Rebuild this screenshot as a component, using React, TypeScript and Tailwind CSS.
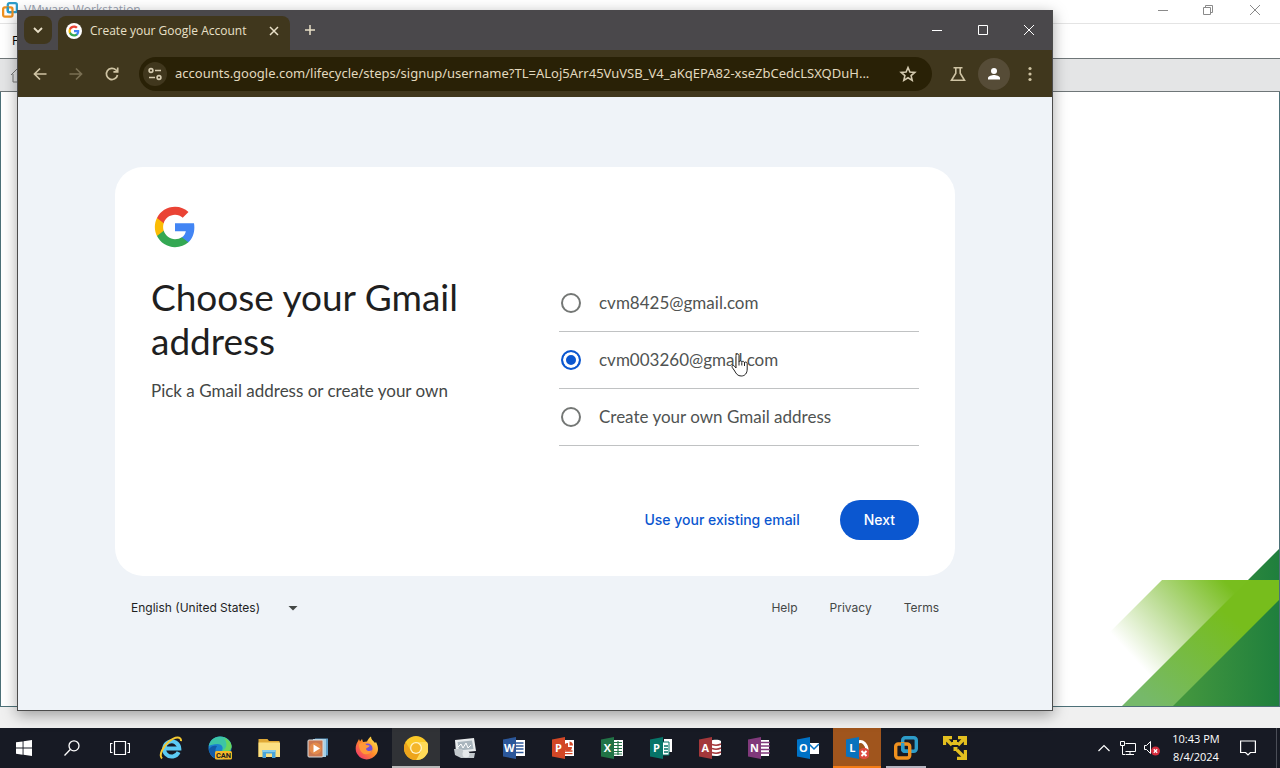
import { useState } from "react";
import type { ReactNode } from "react";

interface AddressOption {
  id: string;
  label: string;
}

interface TaskbarApp {
  name: string;
  icon: ReactNode;
  state?: "active" | "alert" | "open";
}

const addressOptions: AddressOption[] = [
  { id: "suggested-1", label: "cvm8425@gmail.com" },
  { id: "suggested-2", label: "cvm003260@gmail.com" },
  { id: "custom", label: "Create your own Gmail address" },
];

const footerLinks = ["Help", "Privacy", "Terms"];

function GoogleLogo({ className }: { className?: string }) {
  return (
    <svg className={className} viewBox="0 0 48 48">
      <path fill="#4285F4" d="M45.12 24.5c0-1.56-.14-3.06-.4-4.5H24v8.51h11.84c-.51 2.75-2.06 5.08-4.39 6.64v5.52h7.11c4.16-3.83 6.56-9.47 6.56-16.17z" />
      <path fill="#34A853" d="M24 46c5.94 0 10.92-1.97 14.56-5.33l-7.11-5.52c-1.97 1.32-4.49 2.1-7.45 2.1-5.73 0-10.58-3.87-12.31-9.07H4.34v5.7C7.96 41.07 15.4 46 24 46z" />
      <path fill="#FBBC05" d="M11.69 28.18C11.25 26.86 11 25.45 11 24s.25-2.86.69-4.18v-5.7H4.34C2.85 17.09 2 20.45 2 24s.85 6.91 2.34 9.88l7.35-5.7z" />
      <path fill="#EA4335" d="M24 10.75c3.23 0 6.13 1.11 8.41 3.29l6.31-6.31C34.91 4.18 29.93 2 24 2 15.4 2 7.96 6.93 4.34 14.12l7.35 5.7c1.73-5.2 6.58-9.07 12.31-9.07z" />
    </svg>
  );
}

function VmwareIcon({ className }: { className?: string }) {
  return (
    <svg className={className} viewBox="0 0 24 24" fill="none" strokeWidth="3.4">
      <rect x="8.7" y="1.7" width="13.6" height="13.6" rx="2.5" stroke="#2d9cc9" />
      <rect x="1.7" y="8" width="14" height="14" rx="2.5" stroke="#f0911f" />
      <path d="M8.7 7v6a2.3 2.3 0 0 0 2.3 2.3h3" stroke="#2d9cc9" />
    </svg>
  );
}

// Office 2016 style tile: coloured folder front with a letter, document at the back
function OfficeIcon({ letter, color, children }: { letter: string; color: string; children: ReactNode }) {
  return (
    <svg className="h-6 w-6" viewBox="0 0 24 24">
      {children}
      <path d="M1 3.5 14 1v22L1 20.5z" fill={color} />
      <text x="7.4" y="16.2" fill="#fff" fontSize="11" fontWeight="700" textAnchor="middle" fontFamily="Open Sans, sans-serif">
        {letter}
      </text>
    </svg>
  );
}

const apps: TaskbarApp[] = [
  {
    name: "Internet Explorer",
    icon: (
      <svg className="h-6 w-6" viewBox="0 0 24 24" fill="none">
        <path d="M19.6 16.2A7.6 7.6 0 1 1 20.3 12.6H6.5" stroke="#5ccbf3" strokeWidth="4" />
        <path d="M3 22.5C-.5 19 4 10.500 10 5.500S22.500 0 22 5.200" stroke="#f5c931" strokeWidth="2" />
      </svg>
    ),
  },
  {
    name: "Microsoft Edge Canary",
    icon: (
      <svg className="h-6 w-6" viewBox="0 0 24 24">
        <circle cx="12" cy="12" r="11.500" fill="#1c82cf" />
        <path d="M.8 10C2 4 6.500.5 12 .5c7 0 11.500 5 11.500 9.500 0 4-3 6-6 6s-4-1-3-3c.8-2-1-5-5-5-4 0-7 1-8.700 2z" fill="#3dc5a5" />
        <path d="M16 2c5 2 7.500 5 7.500 8.500 0 3.500-3 5.500-6 5.500-1.500 0-3-.5-3-1.500C20 12 19 6 16 2z" fill="#69d65c" />
        <path d="M8 12c-2 4 1 10 7 11-8 1.500-14-4-14-10 2-3 5-4 8-3z" fill="#125aa8" />
        <rect x="7" y="15" width="17" height="8.500" rx="1.500" fill="#f7b928" />
        <text x="15.500" y="22" fontSize="7.500" fontWeight="700" textAnchor="middle" fill="#222" fontFamily="Roboto, sans-serif">CAN</text>
      </svg>
    ),
  },
  {
    name: "File Explorer",
    icon: (
      <svg className="h-6 w-6" viewBox="0 0 24 24">
        <path d="M1.500 3h9l1.500 2h10.500v16h-21z" fill="#dfa937" />
        <path d="M1.500 6.500H23V21H1.500z" fill="#fbe083" />
        <path d="M5.500 22v-8h13v8h-3.500v-4.500h-6V22z" fill="#49a5db" />
        <path d="M5.500 14h13v2h-13z" fill="#83cbed" />
      </svg>
    ),
  },
  {
    name: "Media Player",
    icon: (
      <svg className="h-6 w-6" viewBox="0 0 24 24">
        <path d="M9 2.500h13v17H9z" fill="#5f9fca" />
        <path d="M7 3h13v18H7z" fill="#a7d0e6" />
        <rect x="2" y="4" width="15" height="17" rx="1" fill="#ca7851" stroke="#d5dce0" />
        <circle cx="9.500" cy="12.500" r="6" fill="#e38b4c" />
        <path d="M7.500 8.500v8l6.500-4z" fill="#fff" />
      </svg>
    ),
  },
  {
    name: "Firefox",
    icon: (
      <svg className="h-6 w-6" viewBox="0 0 24 24">
        <defs>
          <linearGradient id="fox" x1="1" y1="0" x2="0" y2="1">
            <stop offset=".1" stopColor="#ffe34a" />
            <stop offset=".5" stopColor="#ff8a2b" />
            <stop offset=".95" stopColor="#f02f72" />
          </linearGradient>
        </defs>
        <path d="M2.500 6 4 3l1 2.500L7 3l1 3 4-.5C13 3 14 2 16 .5c0 3 2 4 4 6.500l1-1c2 4 3 8 .5 12C17 25 7 25 3 19-.5 15 .5 9 2.500 6z" fill="url(#fox)" />
        <circle cx="12.500" cy="12.500" r="5" fill="#7350d8" />
        <path d="M4 8c3-2 6-1 7.500 1l3 .5c0 2-3 2-3.500 3.500 1 2.500 4 2.500 6 1-1 5-8 6-11 1.500C4 13 4 10 4 8z" fill="#ff9838" />
      </svg>
    ),
  },
  {
    name: "Chrome Canary",
    state: "active",
    icon: (
      <svg className="h-6 w-6" viewBox="0 0 24 24">
        <circle cx="12" cy="12" r="12" fill="#fbc928" />
        <path d="M12 6h11A12 12 0 0 1 12 24l5.200-9z" fill="#ffda57" />
        <path d="M1.600 6A12 12 0 0 0 12 24l5-9-10 0z" fill="#eea51c" />
        <circle cx="12" cy="12" r="6" fill="#fff2c4" />
        <circle cx="12" cy="12" r="4.700" fill="#f4b629" />
      </svg>
    ),
  },
  {
    name: "Server Monitor",
    icon: (
      <svg className="h-6 w-6" viewBox="0 0 24 24">
        <path d="M2 4 21 2l2 13-20 2z" fill="#e8ebed" />
        <path d="m4.500 6 14.500-1.500 1.500 8.500-14.500 1.500z" fill="#a9b5bd" />
        <path d="m5 11 3-3 2 4 3-5 2 5 3-3" fill="none" stroke="#fff" />
        <path d="M1 13h8l2 4h11l-1 5H8l-6-3z" fill="#c3c9cd" />
        <circle cx="13" cy="18" r="3.500" fill="#e6e9eb" />
      </svg>
    ),
  },
  {
    name: "Word",
    icon: (
      <OfficeIcon letter="W" color="#2b579a">
        <path d="M12 4h11v16H12z" fill="#fff" />
        <path d="M14 7h7.500M14 10h7.500M14 13h7.500M14 16.500h7.500" stroke="#2b579a" strokeWidth="1.400" />
      </OfficeIcon>
    ),
  },
  {
    name: "PowerPoint",
    icon: (
      <OfficeIcon letter="P" color="#d24726">
        <path d="M12 4h11v16H12z" fill="#fff" />
        <path d="M14 15h7.500M14 17.700h7.500" stroke="#d24726" strokeWidth="1.300" />
        <path d="M17 7v4h4a4 4 0 1 1-4-4z" fill="#d24726" />
        <path d="M18.500 5.500v4h3.500a4 4 0 0 0-3.500-4z" fill="#d24726" />
      </OfficeIcon>
    ),
  },
  {
    name: "Excel",
    icon: (
      <OfficeIcon letter="X" color="#217346">
        <path d="M12 4h11v16H12z" fill="#fff" />
        <path d="M14 6.500h8M14 9.500h8M14 12.500h8M14 15.500h8M14 18h8M18 5v14" stroke="#217346" strokeWidth="1.200" />
      </OfficeIcon>
    ),
  },
  {
    name: "Publisher",
    icon: (
      <OfficeIcon letter="P" color="#077568">
        <path d="M15 3h8v13h-8z" fill="#fff" />
        <path d="M12 6h8v13h-8z" fill="#fff" stroke="#077568" />
        <path d="M15 10h4M15 13h4M15 16h4" stroke="#077568" strokeWidth="1.300" />
      </OfficeIcon>
    ),
  },
  {
    name: "Access",
    icon: (
      <OfficeIcon letter="A" color="#a4373a">
        <path d="M12 5c4-2 9-1.500 11 0v13.500c-2 2-7 2-11 .5z" fill="#fff" />
        <path d="M14 8.500c3 1 6 1 9-.5M14 12.500c3 1 6 1 9-.5M14 16.500c3 1 6 1 9-.5" stroke="#a4373a" strokeWidth="1.400" fill="none" />
      </OfficeIcon>
    ),
  },
  {
    name: "OneNote",
    icon: (
      <OfficeIcon letter="N" color="#80397b">
        <path d="M12 4h10v16H12z" fill="#fff" />
        <path d="M14 6.500h9M14 10h9M14 13.500h9M14 17h9" stroke="#80397b" strokeWidth="1.500" />
      </OfficeIcon>
    ),
  },
  {
    name: "Outlook",
    icon: (
      <OfficeIcon letter="O" color="#0072c6">
        <path d="M12 7h11v11H12z" fill="#fff" />
        <path d="m13 8 5 5 5-5" stroke="#0072c6" strokeWidth="1.500" fill="none" />
      </OfficeIcon>
    ),
  },
  {
    name: "Lync",
    state: "alert",
    icon: (
      <OfficeIcon letter="L" color="#0a72bd">
        <path d="M13 6c5-2 9 3 9 8" stroke="#fff" strokeWidth="3" fill="none" />
        <circle cx="19" cy="17.500" r="5.800" fill="#dc4b3e" />
        <path d="m16.500 15 5 5m0-5-5 5" stroke="#fff" strokeWidth="2" />
      </OfficeIcon>
    ),
  },
  { name: "VMware Workstation", state: "open", icon: <VmwareIcon className="h-6 w-6" /> },
  {
    name: "Remote Tools",
    icon: (
      <svg className="h-6 w-6" viewBox="0 0 24 24" fill="none" stroke="#e3bf1f" strokeWidth="3.200">
        <path d="M1.600 9V1.600H9M2 2l7 7M15 1.600h7.400V9M22 2l-7 7M22.400 14v8.400H14M22 22l-8-8M9 7.500h6" />
        <path d="M10 4h4v3h-4zM10.500 11h4v4h-4z" fill="#e3bf1f" stroke="none" />
      </svg>
    ),
  },
];

function CaptionIcon({ d }: { d: string }) {
  return (
    <svg className="h-3 w-3" viewBox="0 0 12 12" fill="none" stroke="currentColor">
      <path d={d} />
    </svg>
  );
}

function VmwareWindow() {
  return (
    <section className="absolute inset-0 flex flex-col bg-[#f0f0f0] font-['Open_Sans',sans-serif] text-xs">
      <div className="flex h-6 shrink-0 items-center border-b border-[#e4e4e4] bg-white pb-1 pl-0.5">
        <VmwareIcon className="h-4 w-4" />
        <span className="ml-1.5 text-gray-400">VMware Workstation</span>
        <div className="ml-auto flex items-center text-[#8a8a8a]">
          <button aria-label="Minimize workstation" className="grid h-5 w-[45px] place-items-center"><CaptionIcon d="M1 6.500h10" /></button>
          <button aria-label="Restore workstation" className="grid h-5 w-[45px] place-items-center"><CaptionIcon d="M1.500 3.500h7v7h-7zM3.500 3.500v-2h7v7h-2" /></button>
          <button aria-label="Close workstation" className="grid h-5 w-[50px] place-items-center"><CaptionIcon d="m1 1 10 10M11 1 1 11" /></button>
        </div>
      </div>
      <div className="flex h-[34px] shrink-0 items-center bg-white px-3">File</div>
      <div className="flex h-[34px] shrink-0 items-center border-y border-[#6f7678] bg-[#e4e5e6] px-2.5">
        <svg className="h-4 w-4" viewBox="0 0 16 16" fill="none" stroke="#777"><path d="m1 8 7-7 7 7M3 7v8h10V7" /></svg>
      </div>
      <div className="flex flex-1 items-end justify-end border-x border-b border-[#4d7078] bg-white">
        <svg className="h-[158px] w-[190px]" viewBox="0 0 190 158">
          <defs>
            <linearGradient id="leaf" gradientUnits="userSpaceOnUse" x1="142" y1="40" x2="50" y2="125">
              <stop offset="0" stopColor="#78be1e" />
              <stop offset=".45" stopColor="#b5d98a" />
              <stop offset=".95" stopColor="#fff" />
            </linearGradient>
            <linearGradient id="band" x1="1" y1="0" x2="0" y2="1">
              <stop offset=".3" stopColor="#77bd1c" />
              <stop offset=".9" stopColor="#76b96a" />
            </linearGradient>
            <linearGradient id="forest" x1="0" x2="1">
              <stop offset=".4" stopColor="#42963e" />
              <stop offset="1" stopColor="#1f7f3d" />
            </linearGradient>
          </defs>
          <path d="M190 1v157H33z" fill="url(#forest)" />
          <path d="M73 32h117L64 158H33L0 105z" fill="url(#leaf)" />
          <path d="M33 158 159 32h31v20L84 158z" fill="url(#band)" />
        </svg>
      </div>
      <div className="h-[21px] shrink-0" />
    </section>
  );
}

function BrowserChrome() {
  return (
    <header className="shrink-0 font-['Open_Sans',sans-serif] text-[#e9e0c8]">
      <div className="flex h-10 items-stretch bg-[#4a484b]">
        <button aria-label="Search tabs" className="mt-1.5 ml-1.5 grid h-7 w-7 place-items-center rounded-lg bg-[#40371d]">
          <svg className="h-3 w-3" viewBox="0 0 12 12" fill="none" stroke="currentColor" strokeWidth="1.800"><path d="m2 4 4 4 4-4" /></svg>
        </button>
        <div className="mt-1.5 ml-1.5 flex w-[232px] items-center rounded-t-lg bg-[#40371d] px-2 pb-1">
          <span className="grid h-4 w-4 shrink-0 place-items-center rounded-full bg-white"><GoogleLogo className="h-3 w-3" /></span>
          <span className="ml-2 flex-1 text-xs whitespace-nowrap">Create your Google Account</span>
          <button aria-label="Close tab" className="grid h-4 w-4 place-items-center">
            <svg className="h-2.5 w-2.5" viewBox="0 0 10 10" stroke="currentColor" strokeWidth="1.500"><path d="m1 1 8 8M9 1 1 9" /></svg>
          </button>
        </div>
        <button aria-label="New tab" className="ml-2 grid w-6 place-items-center">
          <svg className="h-3 w-3" viewBox="0 0 12 12" stroke="currentColor" strokeWidth="1.500"><path d="M6 1v10M1 6h10" /></svg>
        </button>
        <div className="ml-auto flex text-white">
          <button aria-label="Minimize" className="grid w-[46px] place-items-center"><CaptionIcon d="M1 6.500h10" /></button>
          <button aria-label="Maximize" className="grid w-[46px] place-items-center"><CaptionIcon d="M1.500 1.500h9v9h-9z" /></button>
          <button aria-label="Close" className="grid w-[46px] place-items-center"><CaptionIcon d="m1 1 10 10M11 1 1 11" /></button>
        </div>
      </div>

      <div className="flex h-[47px] items-center bg-[#40371d] pr-3 pl-px">
        <button aria-label="Back" className="grid h-8 w-9 place-items-center pl-1.5">
          <svg className="h-4 w-4" viewBox="0 0 16 16" fill="none" stroke="#cfc4a4" strokeWidth="1.700"><path d="M14.500 8H2.500M8 2.500 2.500 8 8 13.500" /></svg>
        </button>
        <button aria-label="Forward" className="grid h-8 w-9 place-items-center pl-1.5">
          <svg className="h-4 w-4" viewBox="0 0 16 16" fill="none" stroke="#7a7053" strokeWidth="1.700"><path d="M1.500 8h12M8 2.500 13.500 8 8 13.500" /></svg>
        </button>
        <button aria-label="Reload" className="grid h-8 w-9 place-items-center pl-1.5">
          <svg className="h-4 w-4" viewBox="0 0 16 16" fill="none" stroke="#cfc4a4" strokeWidth="1.700"><path d="M13.500 9A5.600 5.600 0 1 1 12 4l1.500 1.500M13.700 1.500v4.300H9.400" /></svg>
        </button>
        <div className="ml-3 flex h-[34px] flex-1 items-center rounded-full bg-[#292106] pr-3.5 pl-1">
          <span className="grid h-6 w-6 shrink-0 place-items-center rounded-full bg-[#40371d]">
            <svg className="h-4 w-4" viewBox="0 0 16 16" fill="none" stroke="#d5cbb0" strokeWidth="1.600"><circle cx="4" cy="4.500" r="1.900" /><path d="M8 4.500h6M2 11.500h6" /><circle cx="12" cy="11.500" r="1.900" /></svg>
          </span>
          <input
            aria-label="Address"
            readOnly
            className="ml-2 min-w-0 flex-1 bg-transparent font-['Noto_Sans',sans-serif] text-[13px] text-[#e2d9bf] outline-none"
            value="accounts.google.com/lifecycle/steps/signup/username?TL=ALoj5Arr45VuVSB_V4_aKqEPA82-xseZbCedcLSXQDuH..."
          />
          <button aria-label="Bookmark" className="ml-1">
            <svg className="h-5 w-5" viewBox="0 0 20 20" fill="none" stroke="#d5cbb0" strokeWidth="1.600"><path d="m10 3.500 1.900 4.500 4.900.4-3.700 3.200 1.100 4.800-4.200-2.600-4.200 2.600 1.100-4.800-3.700-3.200 4.900-.4z" /></svg>
          </button>
        </div>
        <button aria-label="Labs" className="ml-4">
          <svg className="h-5 w-5" viewBox="0 0 20 20" fill="none" stroke="#cfc4a4" strokeWidth="1.600"><path d="M5.500 3.800h9M7.800 4v5.200L3.500 16.300h13L12.200 9.200V4" /></svg>
        </button>
        <button aria-label="Profile" className="ml-2.5 grid h-8 w-8 place-items-center rounded-full bg-[#564c37]">
          <svg className="h-4 w-4" viewBox="0 0 16 16" fill="#fff"><circle cx="8" cy="5" r="3" /><path d="M2 13.500v-1.500c0-2 4-3 6-3s6 1 6 3v1.500z" /></svg>
        </button>
        <button aria-label="Menu" className="ml-2.5">
          <svg className="h-5 w-5" viewBox="0 0 20 20" fill="#cfc4a4"><circle cx="10" cy="4.500" r="1.600" /><circle cx="10" cy="10" r="1.600" /><circle cx="10" cy="15.500" r="1.600" /></svg>
        </button>
      </div>
    </header>
  );
}

function SignupPage() {
  const [selected, setSelected] = useState("suggested-2");

  return (
    <main className="flex-1 bg-[#eff3f8] pt-[70px] font-['Lato',sans-serif] text-[#1f1f1f]">
      <div className="mx-auto max-w-[840px]">
        <form className="rounded-[28px] bg-white p-9" onSubmit={(e) => e.preventDefault()}>
          <GoogleLogo className="h-12 w-12 p-0.5" />
          <div className="mt-6 flex justify-between">
            <div className="w-[360px]">
              <h1 className="text-[37px] leading-[44px]">Choose your Gmail address</h1>
              <p className="mt-4 text-[17px] leading-6 text-[#444746]">Pick a Gmail address or create your own</p>
            </div>

            {/* Address choices */}
            <div className="relative w-[360px]">
              {addressOptions.map((option) => (
                <label key={option.id} className="flex h-[57px] items-center border-b border-[#c0c2c3] pl-0.5">
                  <input
                    type="radio"
                    name="address"
                    checked={selected === option.id}
                    onChange={() => setSelected(option.id)}
                    className="h-5 w-5 appearance-none rounded-full border-2 border-[#747775] bg-white checked:border-[#0b57d0] checked:bg-[#0b57d0] checked:shadow-[inset_0_0_0_3px_white]"
                  />
                  <span className="ml-[18px] text-[17px] leading-6 text-[#505352]">{option.label}</span>
                </label>
              ))}
              {/* Hand pointer */}
              <svg className="pointer-events-none absolute top-[78px] left-[172px] h-6 w-[18px]" viewBox="0 0 18 24">
                <path d="M5 15V2.500C5 .5 8 .5 8 2.500V9c0-1.500 2.800-1.500 2.800.3 0-1.500 2.700-1.300 2.700.6 0-1.300 2.700-1.200 2.700.8V16c0 4-2 7-6 7-3.500 0-5-2.200-6.500-5L1.300 14.500c-1-1.700 1-2.800 2.200-1.300z" fill="#fff" stroke="#222" />
                <path d="M8 9v3.500M10.800 9.500v3M13.500 10v3" stroke="#222" fill="none" />
              </svg>
            </div>
          </div>
          <div className="mt-[54px] flex items-center justify-end gap-4 font-['Inter',sans-serif] text-sm font-medium">
            <button type="button" className="h-10 px-6 text-[#0b57d0]">Use your existing email</button>
            <button type="submit" className="h-10 rounded-full bg-[#0b57d0] px-6 text-white">Next</button>
          </div>
        </form>

        <footer className="flex items-center justify-between px-4 pt-6 font-['Inter',sans-serif] text-xs">
          <div className="flex items-center">
            <select aria-label="Language" className="w-[152px] appearance-none bg-transparent outline-none">
              <option>English (United States)</option>
            </select>
            <svg className="ml-1 h-3 w-3" viewBox="0 0 12 12" fill="#444746"><path d="M1.500 4h9L6 8.500z" /></svg>
          </div>
          <nav className="flex gap-8 text-[#444746]">
            {footerLinks.map((link) => (
              <a key={link} href="#">{link}</a>
            ))}
          </nav>
        </footer>
      </div>
    </main>
  );
}

function Taskbar() {
  return (
    <footer className="flex h-10 shrink-0 items-stretch bg-[#171a24] text-white">
      <button aria-label="Start" className="grid w-12 place-items-center">
        <svg className="h-4 w-4" viewBox="0 0 16 16" fill="#fff"><path d="M0 2.300 6.600 1.400v6.200H0zM7.500 1.200 16 0v7.600H7.500zM0 8.500h6.600v6.200L0 13.800zM7.500 8.500H16V16l-8.500-1.200z" /></svg>
      </button>
      <button aria-label="Search" className="grid w-12 place-items-center">
        <svg className="h-4 w-4" viewBox="0 0 16 16" fill="none" stroke="#fff" strokeWidth="1.300"><circle cx="10" cy="5.800" r="5" /><path d="M6.500 9.300.5 15.500" /></svg>
      </button>
      <button aria-label="Task View" className="grid w-12 place-items-center">
        <svg className="h-4 w-5" viewBox="0 0 20 16" fill="none" stroke="#fff" strokeWidth="1.200"><path d="M4.500 1.500h11v13h-11zM2.500 3.500h-2v9h2M17.500 3.500h2v9h-2" /></svg>
      </button>
      <div className="ml-[3px] flex gap-px">
        {apps.map((app) => (
          <button
            key={app.name}
            aria-label={app.name}
            className={`grid w-12 place-items-center ${
              app.state === "active"
                ? "border-b-2 border-[#b9b9b9] bg-[#303236] pt-0.5"
                : app.state === "alert"
                  ? "border-b-2 border-[#f57c16] bg-[#a0551d] pt-0.5"
                  : ""
            }`}
          >
            {app.icon}
            {app.state === "open" && <span className="absolute bottom-0 h-0.5 w-10 bg-[#b4b4c0]" />}
          </button>
        ))}
      </div>

      {/* Tray */}
      <div className="ml-auto flex items-center">
        <svg className="h-3 w-3" viewBox="0 0 12 12" fill="none" stroke="#fff" strokeWidth="1.200"><path d="m.5 9 5.500-5.500L11.500 9" /></svg>
        <svg className="ml-2.5 h-4 w-4" viewBox="0 0 16 16" fill="none" stroke="#fff"><path d="M5.500 3.500h10v8h-10M10 11.500v3M6 14.500h8M.5 1.500h4v4h-4zM2.500 5.500v9h3" /></svg>
        <svg className="ml-2 h-4 w-4" viewBox="0 0 16 16" fill="none" stroke="#fff"><path d="M.5 5.500h2l4-4v12l-4-4h-2z" /><circle cx="11.500" cy="11" r="4.500" fill="#d52b3c" stroke="none" /><path d="m9.800 9.300 3.400 3.400m0-3.400-3.400 3.400" strokeWidth="1.300" /></svg>
        <div className="ml-1 w-16 text-center font-['Open_Sans',sans-serif] text-[11px] leading-[18px] whitespace-nowrap">
          <div>10:43 PM</div>
          <div>8/4/2024</div>
        </div>
        <button aria-label="Notifications" className="ml-3">
          <svg className="h-4 w-4" viewBox="0 0 16 16" fill="none" stroke="#fff" strokeWidth="1.200"><path d="M.6 1h14.800v11.500h-5L8 15l-2.400-2.500h-5z" /></svg>
        </button>
        <span className="mr-[3px] ml-5 h-10 border-l border-[#4b4e57]" />
      </div>
    </footer>
  );
}

export default function App() {
  return (
    <div className="flex h-screen flex-col overflow-hidden">
      <div className="relative flex-1">
        <VmwareWindow />
        <section className="absolute top-[10px] right-[227px] bottom-[17px] left-[17px] flex flex-col border border-t-0 border-[#4c4c4c] shadow-[0_4px_14px_rgba(0,0,0,0.35)]">
          <BrowserChrome />
          <SignupPage />
        </section>
      </div>
      <Taskbar />
    </div>
  );
}
